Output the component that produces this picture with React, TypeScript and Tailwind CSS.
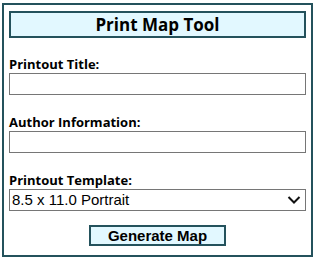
import React from 'react';

const labelCls = "block text-[13px] leading-[18px] font-bold text-black font-['Open_Sans',sans-serif]";
const inputCls = "block w-full h-[22px] border border-[#767676] bg-white px-1 text-[14px] font-['Liberation_Sans',Arial,sans-serif] outline-none";

const Field: React.FC<{ label: string }> = ({ label }) => (
    <div>
        <label className={labelCls}>{label}</label>
        <input type="text" className={inputCls} />
    </div>
)

export default function App() {
    return (
        <div className="w-[317px] h-[259px] bg-white pt-[3px] pl-[2px]">
            <div className="w-[311px] h-[254px] border-2 border-[#24525c] px-[5px] pt-[6px]">
                {/* Header */}
                <div className="h-[27px] border-2 border-[#24525c] bg-[#e2f8ff] flex items-center justify-center">
                    <span className="text-[17px] font-bold text-black font-['Open_Sans',sans-serif]">
                        Print Map Tool
                    </span>
                </div>

                <div className="flex flex-col gap-[18px] mt-[17px]">
                    <Field label="Printout Title:" />
                    <Field label="Author Information:" />
                    <div>
                        <label className={labelCls}>Printout Template:</label>
                        <div className="relative">
                            <select className="block w-full h-[22px] appearance-none border border-[#767676] bg-white pl-[2px] text-[15px] leading-[20px] text-black font-['Liberation_Sans',Arial,sans-serif] outline-none">
                                <option>8.5 x 11.0 Portrait</option>
                                <option>11.0 x 8.5 Landscape</option>
                            </select>
                            <svg className="absolute right-[5px] top-[6px] pointer-events-none" width="14" height="10" viewBox="0 0 14 10">
                                <path d="M1.5 2 L7 7.5 L12.5 2" fill="none" stroke="#111" strokeWidth="2" />
                            </svg>
                        </div>
                    </div>
                </div>

                <div className="flex justify-center mt-[14px]">
                    <button className="w-[137px] h-[21px] border-2 border-[#24525c] bg-[#e2f8ff] text-[15px] leading-none font-bold text-black font-['Liberation_Sans',Arial,sans-serif]">
                        Generate Map
                    </button>
                </div>
            </div>
        </div>
    )
}
